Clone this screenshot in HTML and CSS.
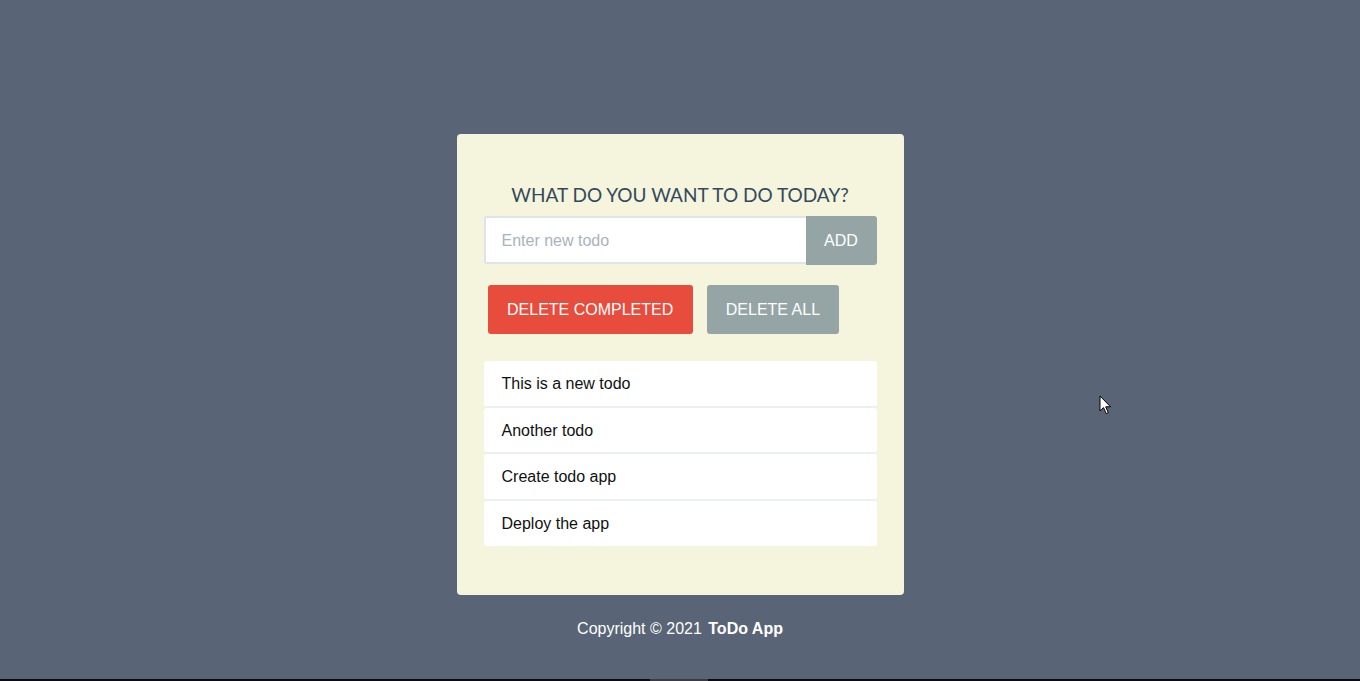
FILE: index.html
```html
<!DOCTYPE html>
<html lang="en">
<head>
<meta charset="utf-8">
<title>ToDo App</title>
<link rel="stylesheet" href="styles.css">
</head>
<body>
<main class="page">
  <section class="card">
    <h1 class="title">WHAT DO YOU WANT TO DO TODAY?</h1>
    <form class="add-row">
      <input class="todo-input" type="text" placeholder="Enter new todo">
      <button class="btn btn-add" type="button">ADD</button>
    </form>
    <div class="actions">
      <button class="btn btn-red" type="button">DELETE COMPLETED</button>
      <button class="btn btn-gray" type="button">DELETE ALL</button>
    </div>
    <ul class="todo-list">
      <li class="todo-item">This is a new todo</li>
      <li class="todo-item">Another todo</li>
      <li class="todo-item">Create todo app</li>
      <li class="todo-item">Deploy the app</li>
    </ul>
  </section>
  <footer class="footer">Copyright © 2021 <strong>ToDo App</strong></footer>
</main>
<div class="bottom-bar"><span class="bar-thumb"></span></div>
<svg class="cursor" width="13" height="20" viewBox="0 0 13 20"><path d="M1 1 L1 16 L4.5 12.6 L7.2 18.6 L9.3 17.7 L6.7 11.8 L11.5 11.8 Z" fill="#fff" stroke="#000" stroke-width="1" stroke-linejoin="miter"/></svg>
</body>
</html>
```
FILE: styles.css
```css
* { box-sizing: border-box; }
html, body { margin: 0; padding: 0; }
body {
  background: #596576;
  font-family: "Liberation Sans", Arial, sans-serif;
  height: 100vh;
  display: flex;
  flex-direction: column;
  overflow: hidden;
  position: relative;
}
.page {
  flex: 1;
  display: flex;
  flex-direction: column;
  align-items: center;
  padding-top: 134px;
}
.card {
  width: 447px;
  background: #f4f5dc;
  border-radius: 4px;
  padding: 49px 27px 49px 27px;
}
.title {
  margin: 0 0 9px 0;
  font-family: Lato, "Liberation Sans", sans-serif;
  font-weight: 400;
  font-size: 19px;
  line-height: 24px;
  color: #34495e;
  text-align: center;
}
.add-row {
  display: flex;
  margin: 0;
}
.todo-input {
  width: 322px;
  height: 48px;
  border: 2px solid #dde4ea;
  border-right: none;
  border-radius: 3px 0 0 3px;
  padding: 2px 16px 0 16px;
  font-family: "Liberation Sans", Arial, sans-serif;
  font-size: 16px;
  color: #333;
  background: #fff;
  outline: none;
}
.todo-input::placeholder { color: #a9b3bd; }
.btn {
  border: none;
  color: #fff;
  font-family: "Liberation Sans", Arial, sans-serif;
  font-size: 16px;
  cursor: pointer;
  height: 49px;
  padding: 0 19.5px;
  border-radius: 3px;
}
.btn-add {
  width: 71px;
  padding: 0;
  background: #95a5a6;
  border-radius: 0 3px 3px 0;
}
.actions {
  display: flex;
  gap: 14px;
  margin: 20px 0 0 4px;
}
.btn-red { background: #e74c3c; }
.btn-gray { background: #95a5a6; padding: 0 19px; }
.todo-list {
  list-style: none;
  margin: 27px 0 0 0;
  padding: 0;
}
.todo-item {
  background: #fff;
  border-bottom: 2px solid #ecf0f1;
  border-radius: 3px;
  padding: 13px 18px 11px 18px;
  font-size: 16px;
  line-height: 20.67px;
  color: #111;
}
.todo-item:last-child { border-bottom: none; }
.footer {
  margin-top: 25px;
  color: #fff;
  font-size: 16px;
  line-height: 18px;
}
.footer strong { margin-left: 2px; }
.bottom-bar {
  height: 2px;
  background: #0c0c0c;
  display: flex;
  padding-left: 650px;
}
.bar-thumb {
  width: 58px;
  height: 2px;
  background: #3c3c3c;
}
.cursor {
  position: absolute;
  left: 1099px;
  top: 395px;
}
```
